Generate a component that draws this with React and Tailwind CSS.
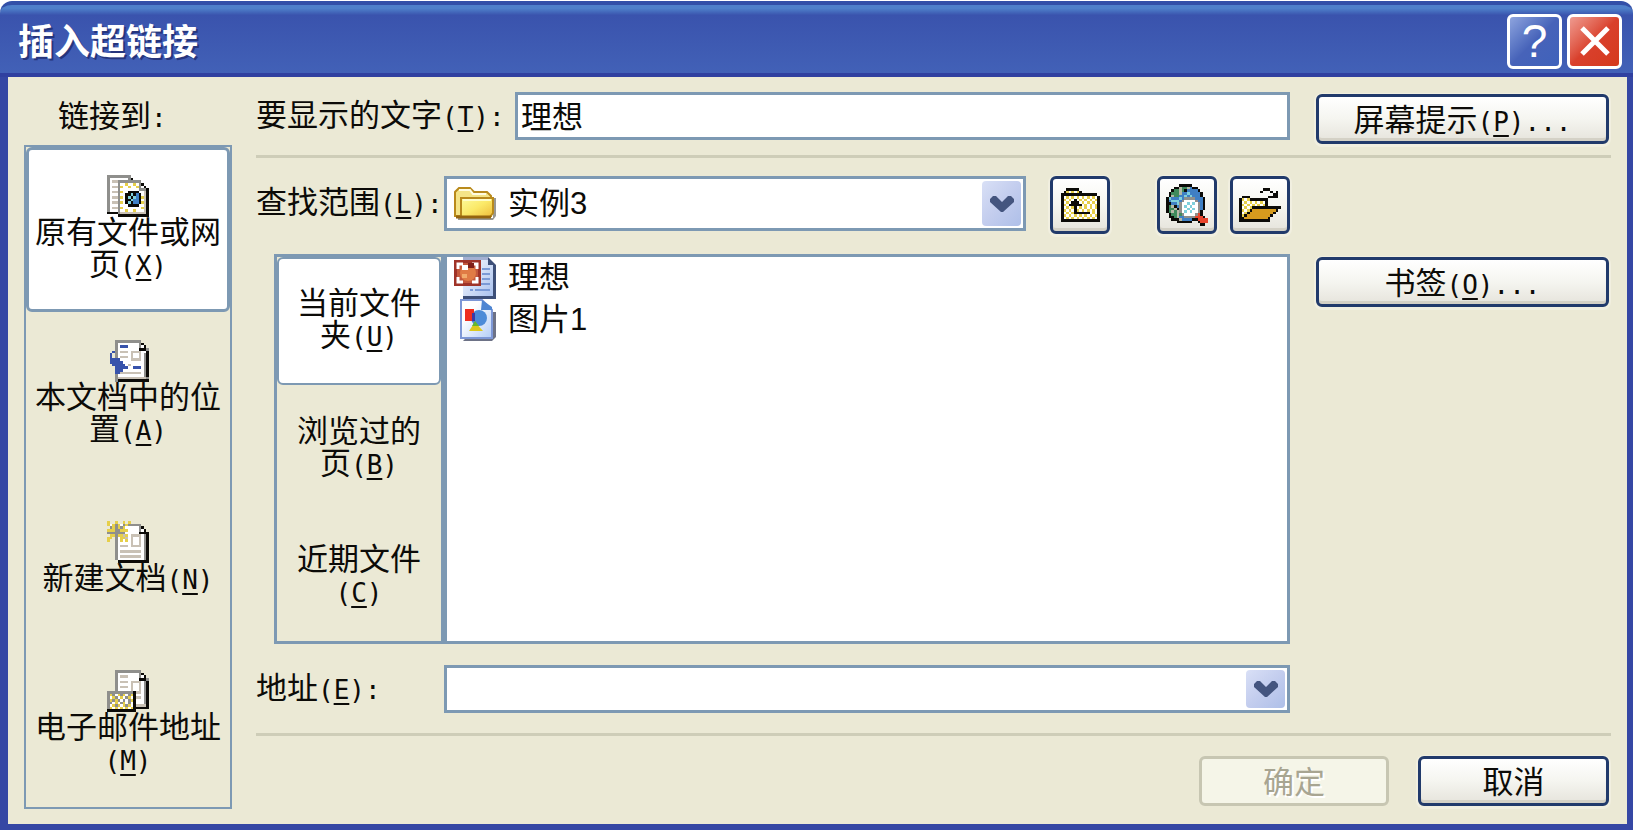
import React from "react";

const palette = {
  k: "#0c0b08",
  w: "#ffffff",
  G: "#8f8f8c",
  t: "#c9c1b5",
  y: "#e6cf4a",
  B: "#3853ab",
  b: "#3f7fc4",
  c: "#7fd0dc",
  g: "#3f8a5c",
  a: "#b5b9a6",
  r: "#e8452c",
  o: "#d79b1e",
};

const webPage = [
  "GGGGGGGGG       ",
  "GwwwwwwwGk      ",
  "GwttGGGGGGGGG   ",
  "GwwwGwwywwywGk  ",
  "GwttGywwywwyGwk ",
  "GwwwGwwwwwwwGGGk",
  "GwttGywwkkkkwwtk",
  "GwwwGwwkkckbkwtk",
  "GwttGywkckcbkytk",
  "GwwwGwwkkcbbkwtk",
  "GwttGywkckbbkytk",
  "GwwwGwwwkkkkwwtk",
  "GwttGywwwwwwwytk",
  "GwwwGwwywwywwwtk",
  "kkkkGttttttttttk",
  "    kkkkkkkkkkkk",
];

const placeInDoc = [
  "   GGGGGGGGGG   ",
  "   GwwwwwwwwGk  ",
  "   GwBBBwwwwGwk ",
  "   GwwwwwwwwkkkG",
  "  BGwtttwttttwwk",
  " B GwwwwwtwwtwGk",
  " B GwtttwtwwtwGk",
  " BBBBwwwwttttwGk",
  " BBBBBwwwwwwwwGk",
  "  BBBBBwtwwwwwGk",
  "   BBBBBwwBBBwGk",
  "   BBBwwwwwwwwGk",
  "   BBttttttttwGk",
  "   GwwwwwwwwwwGk",
  "   GtttttttttttG",
  "   Gkkkkkkkkkkkk",
];

const newDoc = [
  "y  y  y y       ",
  "ywyGywGyGGGGG   ",
  " GyGyGywwwwwGk  ",
  "yyyGGyyywwwwGwk ",
  "GGGGGGGwwwwwkkkk",
  " yyGyytywttttwGk",
  "yy GwyytwtwwtwGk",
  "y  GwywywtwwtwGk",
  "   GwwwwwtwwtwGk",
  "   GwtttwttttwGk",
  "   GwwwwwwwwwwGk",
  "   GwttttttttwGk",
  "   GwwwwwwwwwwGk",
  "   GwttttttttwGk",
  "   GwwwwwwwwwwGk",
  "    kkkkkkkkkkkk",
];

const mailDoc = [
  "   GGGGGGGGGG   ",
  "   GwwwwwwwwGk  ",
  "   GwtttwwwwGwk ",
  "   GwwwwwwwwkkkG",
  "   GwtttwttttwGk",
  "   GwwwwwtwwtwGk",
  "   GwtttwtwwtwGk",
  "   GwwwwwtwwtwGk",
  "GGGGGGGGGGkttwGk",
  "GyGwyGywGykwwwGk",
  "GwyGwywGywkttwGk",
  "GyGyGwGwGykwwwGk",
  "GGwywGywGwkwwwGk",
  "GwyGywyGywkttttk",
  "Gywywywywykkkkkk",
  "kkkkkkkkkkk     ",
];

const folderUp = [
  "  kkkkk        ",
  " kywywyk       ",
  "kkkkkkkkkkkkkk ",
  "kwywywywywywywk",
  "kywywkwywywywyk",
  "kwywkkkwywywywk",
  "kywkkkkkwywywyk",
  "kwywykwywywywyk",
  "kywywkywywywywk",
  "kwywykkkkkkwywk",
  "kywywywywywywyk",
  "kwywywywywywywk",
  "kkkkkkkkkkkkkkk",
];

const webSearch = [
  "     kkkkk      ",
  "   kkaggabkk    ",
  "  kggagkbbbbk   ",
  " kgggabbcbbbbk  ",
  " kaggbbcbcbbbk  ",
  "kcbbbcbGGGGbbbk ",
  "kbcccbGwwwwGbbk ",
  "kkbbcGwwcwcwGbk ",
  "kgakbGwcwcwwGbk ",
  "kggakGwwcwcwGbk ",
  "kgagaGwcwcwwGk  ",
  " kggagGwwwwGrk  ",
  " kkgabbGGGGrrrk ",
  "  kkkabbbbkkrrrr",
  "    kkkkkk  krrr",
  "             kk ",
];

const openFolder = [
  "         kkk    ",
  "        k   k k ",
  "             kk ",
  " kkk       kkkk ",
  "kywykkkkkkk     ",
  "kwywywywywk     ",
  "kywywywywyk     ",
  "kwywykkkkkkkkkkk",
  "kywykoooooooook ",
  "kwykoooooooook  ",
  "kykoooooooook   ",
  "kkoooooooook    ",
  "kkkkkkkkkkkk    ",
];

const PixelIcon = ({ rows, className }) => (
  <svg
    viewBox={`0 0 ${rows[0].length} ${rows.length}`}
    className={className}
    shapeRendering="crispEdges"
    aria-hidden="true"
  >
    {rows.map((row, y) =>
      row.split("").map((c, x) =>
        palette[c] ? (
          <rect key={`${x}-${y}`} x={x} y={y} width="1" height="1" fill={palette[c]} />
        ) : null
      )
    )}
  </svg>
);

const FolderIcon = () => (
  <svg viewBox="0 0 42 36" className="w-[42px] h-9 shrink-0" aria-hidden="true">
    <defs>
      <linearGradient id="folderFront" x1="0" y1="0" x2="1" y2="1">
        <stop offset="0" stopColor="#fdfb9c" />
        <stop offset="0.5" stopColor="#fbe968" />
        <stop offset="1" stopColor="#eebb3a" />
      </linearGradient>
    </defs>
    <path d="M4 34h35l3-4V12h-3v20H4z" fill="#77756f" opacity="0.75" />
    <path d="M1 30V6l4-4h11l4 4h13l4 4v20z" fill="#f4e487" stroke="#b98a1c" strokeWidth="2" />
    <path d="M5 4h11l3 4h13" fill="none" stroke="#fffce0" strokeWidth="2" />
    <path d="M7 12h32v15l-3 4H7z" fill="url(#folderFront)" stroke="#b98a1c" strokeWidth="2" />
    <path d="M9 14h28" stroke="#fffdc8" strokeWidth="2" />
    <path d="M2 31h35" stroke="#94640f" strokeWidth="3" />
  </svg>
);

const SlidesIcon = () => (
  <svg viewBox="0 0 42 42" className="w-[42px] h-[42px] shrink-0" aria-hidden="true">
    <defs>
      <linearGradient id="slidePage" x1="0" y1="0" x2="1" y2="1">
        <stop offset="0" stopColor="#ffffff" />
        <stop offset="1" stopColor="#a9c1ee" />
      </linearGradient>
    </defs>
    <path d="M9 0h25l8 8v34H9z" fill="#3d4f78" />
    <path d="M9 0h25v8h5v31H9z" fill="url(#slidePage)" />
    <path d="M9 0h25v3H9z" fill="#a3b0d2" />
    <path d="M28 12h8M28 17h8M28 22h8M26 27h10M21 33h15M16 33h3" stroke="#7b9ad6" strokeWidth="2" />
    <path d="M0 3h27v26H0z" fill="#9f3328" />
    <path d="M3 6h21v20H3z" fill="#c4593c" />
    <path d="M4 12V7h5M18 7h5v5M23 20v5h-5M9 25H4v-5" fill="none" stroke="#fff" strokeWidth="3" />
    <circle cx="14" cy="16" r="8" fill="#e07b45" />
    <path d="M8 8h6v5H8z" fill="#fff" />
    <path d="M14 6h6v5h-6z" fill="#7f2019" />
    <path d="M8 17h5v4H8z" fill="#f2ab6c" />
  </svg>
);

const ImageIcon = () => (
  <svg viewBox="0 0 42 42" className="w-[42px] h-[42px] shrink-0" aria-hidden="true">
    <defs>
      <linearGradient id="imagePage" x1="0" y1="0" x2="1" y2="1">
        <stop offset="0.3" stopColor="#ffffff" />
        <stop offset="1" stopColor="#b3cdf6" />
      </linearGradient>
    </defs>
    <path d="M9 42h29l4-4V13h-6z" fill="#6d7286" />
    <path d="M7 1h21l10 10v28H7z" fill="url(#imagePage)" stroke="#7d97d6" strokeWidth="2" />
    <path d="M28 1l10 7v3H27z" fill="#4f86d2" />
    <circle cx="25" cy="19" r="8" fill="#4c8bd8" />
    <path d="M11 10h9v12h-9z" fill="#ee2f20" />
    <path d="M18 14h3v8h-3z" fill="#3a3aa8" />
    <path d="M15 32l6-9 8 9z" fill="#dcc81c" />
    <path d="M18 27l3-5 4 5z" fill="#67b82e" />
  </svg>
);

// Accelerator key such as (T), set in half-width cells
const Key = ({ children, after }) => (
  <span className="font-['DejaVu_Sans_Mono',monospace] text-[26px]">
    (<span className="underline decoration-2 underline-offset-4">{children}</span>){after}
  </span>
);

const Button = ({ children, className = "", ...props }) => (
  <button
    type="button"
    className={`flex items-center justify-center rounded-md border-[3px] border-[#213a6b] bg-linear-to-b from-white via-[#f5f5f0] to-[#e6e4dc] shadow-[inset_0_-3px_0_#d4d1c6,0_1px_0_2px_#f1efe0] ${className}`}
    {...props}
  >
    {children}
  </button>
);

const Chevron = () => (
  <span className="flex w-[39px] h-full shrink-0 items-center justify-center rounded-sm bg-linear-to-br from-[#d9e0f6] via-[#c3cdee] to-[#aebfe8]">
    <svg viewBox="0 0 24 16" className="w-6 h-4" aria-hidden="true">
      <path d="M3 0h3l6 6 6-6h3l3 3v3L13 16h-2L0 6V3z" fill="#44557f" />
    </svg>
  </span>
);

const Separator = () => <hr className="border-0 h-[3px] bg-[#cecdb8]" />;

const linkTargets = [
  { icon: webPage, lines: ["原有文件或网", "页"], accel: "X", active: true },
  { icon: placeInDoc, lines: ["本文档中的位", "置"], accel: "A" },
  { icon: newDoc, lines: ["新建文档"], accel: "N" },
  { icon: mailDoc, lines: ["电子邮件地址", ""], accel: "M" },
];

const tabs = [
  { lines: ["当前文件", "夹"], accel: "U", active: true },
  { lines: ["浏览过的", "页"], accel: "B" },
  { lines: ["近期文件", ""], accel: "C" },
];

const Caption = ({ lines, accel }) => (
  <>
    {lines.map((line, i) => (
      <span key={i} className="block h-8 whitespace-nowrap">
        {line}
        {i === lines.length - 1 && <Key>{accel}</Key>}
      </span>
    ))}
  </>
);

const TitleBar = () => (
  <header className="flex h-[76px] items-center justify-between rounded-t-xl border-t-4 border-b-4 border-t-[#3350a8] border-b-[#3040a0] bg-linear-to-b from-[#4f80ca] from-5% via-[#3a53ad] via-15% to-[#4261b7] pl-[18px] pr-[11px] pt-1">
    <h1 className="pt-1 text-[36px] leading-10 font-bold text-white [text-shadow:2px_2px_0_#26357c]">
      插入超链接
    </h1>
    <div className="flex gap-[5px]">
      <button
        type="button"
        aria-label="帮助"
        className="flex h-[55px] w-[55px] items-center justify-center rounded-md border-[3px] border-white bg-linear-to-br from-[#8ea4de] via-[#4763b9] to-[#3f62bb] font-['Liberation_Sans',sans-serif] text-[46px] leading-none text-white"
      >
        ?
      </button>
      <button
        type="button"
        aria-label="关闭"
        className="flex h-[55px] w-[55px] items-center justify-center rounded-md border-[3px] border-white bg-linear-to-br from-[#ee9a90] via-[#d9402c] to-[#d53a1c]"
      >
        <svg viewBox="0 0 30 30" className="w-[30px] h-[30px]" aria-hidden="true">
          <path d="M2 2l26 26M28 2L2 28" stroke="#fff" strokeWidth="5" />
        </svg>
      </button>
    </div>
  </header>
);

const LinkSidebar = () => (
  <div className="flex w-52 shrink-0 flex-col">
    <h2 className="flex h-[68px] items-center pl-[34px] pt-3">
      <span>
        链接到
        <span className="font-['DejaVu_Sans_Mono',monospace] text-[26px]">:</span>
      </span>
    </h2>
    <nav className="grid flex-1 grid-rows-4 border-2 border-[#7d99b3]">
      {linkTargets.map((item) => (
        <button
          key={item.accel}
          type="button"
          className={
            item.active
              ? "flex flex-col items-center justify-center rounded-md border-[3px] border-[#7d99b3] bg-white pb-1"
              : "flex flex-col items-center justify-center border-[3px] border-transparent pb-1"
          }
        >
          <PixelIcon rows={item.icon} className="w-[42px] h-[42px]" />
          <Caption lines={item.lines} accel={item.accel} />
        </button>
      ))}
    </nav>
  </div>
);

const FileBrowser = () => (
  <div className="ml-[18px] flex border-[3px] border-[#7d99b3]">
    <div className="grid w-[164px] shrink-0 grid-rows-3">
      {tabs.map((tab) => (
        <button
          key={tab.accel}
          type="button"
          className={
            tab.active
              ? "flex flex-col items-center justify-center rounded-md border-2 border-[#7d99b3] bg-white pb-0.5"
              : "flex flex-col items-center justify-center border-2 border-transparent pb-0.5"
          }
        >
          <Caption lines={tab.lines} accel={tab.accel} />
        </button>
      ))}
    </div>
    <ul className="flex-1 border-l-[6px] border-[#7d99b3] bg-white pl-[7px]">
      <li className="flex h-[42px] items-center gap-3">
        <SlidesIcon />
        理想
      </li>
      <li className="flex h-[42px] items-center gap-3">
        <ImageIcon />
        图片1
      </li>
    </ul>
  </div>
);

const App = () => {
  return (
    <div className="flex min-h-screen flex-col bg-white pt-px font-['Liberation_Sans','Noto_Sans_CJK_SC',sans-serif] text-[31px] leading-8 text-[#0c0b08]">
      <TitleBar />
      <main className="flex flex-1 gap-6 border-l-8 border-r-[6px] border-b-[6px] border-[#3547a4] bg-[#ebe9d5] pl-4 pr-4 pb-[15px]">
        <LinkSidebar />

        <form className="flex min-w-0 flex-1 flex-col pt-[15px] pb-[3px]">
          {/* Display text */}
          <div className="grid h-[52px] grid-cols-[1fr_293px] gap-[26px] pr-0.5">
            <div className="flex h-12 items-center">
              <label htmlFor="display" className="w-[259px] shrink-0 whitespace-nowrap">
                要显示的文字<Key after=":">T</Key>
              </label>
              <input
                id="display"
                type="text"
                defaultValue="理想"
                className="h-full min-w-0 flex-1 border-[3px] border-[#7d99b3] bg-white px-[3px] pb-1 outline-none"
              />
            </div>
            <Button className="h-[50px] self-end pt-1">
              <span>
                屏幕提示<Key after="...">P</Key>
              </span>
            </Button>
          </div>

          <div className="pt-[11px] pb-[18px]">
            <Separator />
          </div>

          <div className="grid flex-1 grid-cols-[1fr_293px] gap-[26px] pr-0.5">
            <div className="flex flex-col">
              {/* Look in */}
              <div className="mb-5 flex h-[58px] items-start">
                <label htmlFor="lookin" className="flex h-[55px] w-[188px] shrink-0 items-center whitespace-nowrap">
                  <span>
                    查找范围<Key after=":">L</Key>
                  </span>
                </label>
                <div className="flex h-[55px] flex-1 items-center border-[3px] border-[#7d99b3] bg-white py-0.5 pl-[7px] pr-0.5">
                  <FolderIcon />
                  <select
                    id="lookin"
                    className="min-w-0 flex-1 appearance-none bg-white pl-3 outline-none"
                  >
                    <option>实例3</option>
                  </select>
                  <Chevron />
                </div>
                <Button aria-label="上一级文件夹" className="ml-6 h-full w-[60px]">
                  <PixelIcon rows={folderUp} className="w-[39px] h-[34px]" />
                </Button>
                <Button aria-label="浏览 Web" className="ml-[47px] h-full w-[60px]">
                  <PixelIcon rows={webSearch} className="w-[42px] h-[42px]" />
                </Button>
                <Button aria-label="浏览文件" className="ml-[13px] h-full w-[60px]">
                  <PixelIcon rows={openFolder} className="w-[42px] h-[34px]" />
                </Button>
              </div>

              <div className="grid min-h-[390px] flex-1">
                <FileBrowser />
              </div>

              {/* Address */}
              <div className="mt-[21px] flex h-12 items-center">
                <label htmlFor="address" className="w-[188px] shrink-0 whitespace-nowrap">
                  地址<Key after=":">E</Key>
                </label>
                <div className="flex h-full flex-1 border-[3px] border-[#7d99b3] bg-white p-0.5">
                  <input id="address" type="text" className="min-w-0 flex-1 outline-none" />
                  <button type="button" aria-label="展开地址">
                    <Chevron />
                  </button>
                </div>
              </div>
            </div>

            <div className="pt-[81px]">
              <Button className="h-[50px] w-full pt-1">
                <span>
                  书签<Key after="...">O</Key>
                </span>
              </Button>
            </div>
          </div>

          <div className="py-5">
            <Separator />
          </div>

          <div className="flex justify-end gap-[29px] pr-0.5">
            <button
              type="button"
              disabled
              className="h-[50px] w-[190px] rounded-md border-[3px] border-[#c7c6b2] bg-[#f5f5e8] pt-1 text-[#a8a592] [text-shadow:2px_2px_0_#fff]"
            >
              确定
            </button>
            <Button className="h-[50px] w-[191px] pt-1">取消</Button>
          </div>
        </form>
      </main>
    </div>
  );
};

export default App;
